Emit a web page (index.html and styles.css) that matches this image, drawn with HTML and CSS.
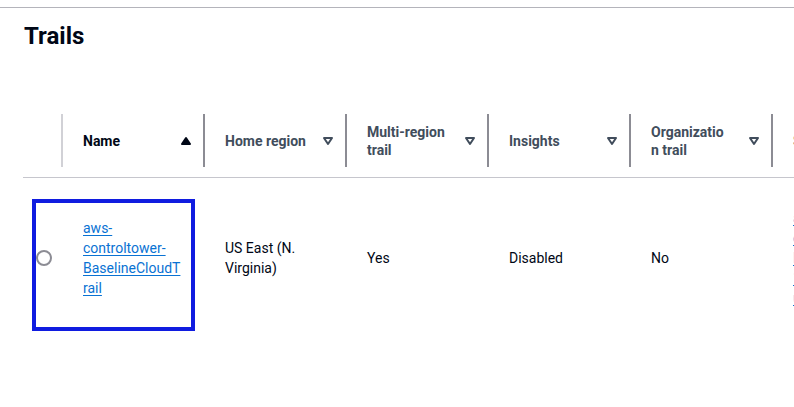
FILE: index.html
```html
<!DOCTYPE html>
<html lang="en">
<head>
<meta charset="utf-8">
<title>Trails</title>
<link rel="stylesheet" href="styles.css">
</head>
<body>
<div class="topline"></div>
<h2 class="title">Trails</h2>
<div class="table">
  <div class="row head">
    <div class="th th-select light"></div>
    <div class="th sorted">
      <span class="label">Name</span>
      <svg class="sort" viewBox="0 0 16 16" width="16" height="16"><path d="M4 11h8L8 5l-4 6z" fill="currentColor" stroke="currentColor" stroke-width="2" stroke-linejoin="round"/></svg>
    </div>
    <div class="th">
      <span class="label">Home region</span>
      <svg class="sort" viewBox="0 0 16 16" width="16" height="16"><path d="M4 5h8l-4 6-4-6z" fill="none" stroke="currentColor" stroke-width="2" stroke-linejoin="round"/></svg>
    </div>
    <div class="th">
      <span class="label">Multi-region trail</span>
      <svg class="sort" viewBox="0 0 16 16" width="16" height="16"><path d="M4 5h8l-4 6-4-6z" fill="none" stroke="currentColor" stroke-width="2" stroke-linejoin="round"/></svg>
    </div>
    <div class="th">
      <span class="label">Insights</span>
      <svg class="sort" viewBox="0 0 16 16" width="16" height="16"><path d="M4 5h8l-4 6-4-6z" fill="none" stroke="currentColor" stroke-width="2" stroke-linejoin="round"/></svg>
    </div>
    <div class="th">
      <span class="label label-narrow">Organization trail</span>
      <svg class="sort" viewBox="0 0 16 16" width="16" height="16"><path d="M4 5h8l-4 6-4-6z" fill="none" stroke="currentColor" stroke-width="2" stroke-linejoin="round"/></svg>
    </div>
    <div class="th">
      <span class="label">S3 bucket</span>
      <svg class="sort" viewBox="0 0 16 16" width="16" height="16"><path d="M4 5h8l-4 6-4-6z" fill="none" stroke="currentColor" stroke-width="2" stroke-linejoin="round"/></svg>
    </div>
  </div>
  <div class="row body-row">
    <div class="td td-select"><span class="radio"></span></div>
    <div class="td"><a class="link" href="#">aws-controltower-BaselineCloudTrail</a></div>
    <div class="td">US East (N. Virginia)</div>
    <div class="td">Yes</div>
    <div class="td">Disabled</div>
    <div class="td">No</div>
    <div class="td"><a class="link" href="#">aws-controltower-logs-123456789012-us-east-1</a></div>
    <div class="focus-ring"></div>
  </div>
</div>
</body>
</html>
```

FILE: styles.css
```css
html, body {
  margin: 0;
  padding: 0;
}
body {
  width: 794px;
  height: 407px;
  overflow: hidden;
  background: #ffffff;
  font-family: Roboto, "Open Sans", Arial, sans-serif;
  color: #000716;
  padding-top: 7px;
  box-sizing: border-box;
}
.topline {
  height: 0;
  border-top: 1px solid #b4b4bb;
}
.title {
  margin: 13px 0 0 24px;
  font-size: 24px;
  line-height: 30px;
  font-weight: 700;
  color: #000716;
}
.table {
  margin: 53px 0 0 23px;
  width: 1092px;
}
.row {
  display: grid;
  grid-template-columns: 40px repeat(6, 142px) 200px;
}
.head {
  border-bottom: 1px solid #c6c6cd;
}
.th {
  position: relative;
  height: 73px;
  box-sizing: border-box;
  display: flex;
  align-items: center;
  padding: 0 11px 0 20px;
  font-size: 14px;
  line-height: 18px;
  font-weight: 700;
  color: #414d5c;
}
.th::after {
  content: "";
  position: absolute;
  right: 0;
  top: 10px;
  bottom: 10px;
  width: 2px;
  background: #8c8c94;
}
.th.light::after {
  background: #d1d1d6;
}
.th.sorted {
  color: #000716;
}
.label {
  flex: 1;
  min-width: 0;
  margin-right: 12px;
  overflow-wrap: anywhere;
}
.label-narrow {
  max-width: 77px;
  margin-right: 18px;
}
.sort {
  flex: none;
  display: block;
}
.sorted .sort {
  color: #000716;
}
.body-row {
  position: relative;
  height: 160px;
}
.td {
  display: flex;
  align-items: center;
  padding: 0 22px 0 20px;
  font-size: 14px;
  line-height: 20px;
  color: #000716;
  overflow-wrap: anywhere;
  min-width: 0;
}
.td-select {
  padding: 0;
  justify-content: center;
}
.radio {
  display: block;
  width: 16px;
  height: 16px;
  box-sizing: border-box;
  border: 2px solid #8c8c94;
  border-radius: 50%;
  margin-left: 2px;
}
.link {
  color: #0972d3;
  text-decoration: underline;
  text-underline-offset: 2px;
}
.focus-ring {
  position: absolute;
  left: 9px;
  top: 21px;
  width: 163px;
  height: 132px;
  box-sizing: border-box;
  border: 4px solid #101ce0;
  pointer-events: none;
}
```
